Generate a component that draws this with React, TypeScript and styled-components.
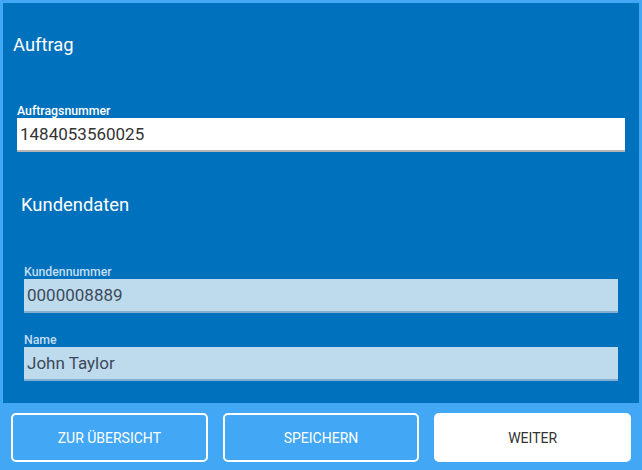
import styled, { createGlobalStyle } from 'styled-components';

const GlobalStyle = createGlobalStyle`
  html, body {
    margin: 0;
    padding: 0;
    background: #42a7f5;
    font-family: Roboto, 'Liberation Sans', sans-serif;
  }
`;

const StyledPage = styled.div`
  width: 642px;
  height: 470px;
  display: flex;
  flex-direction: column;
  box-sizing: border-box;
  padding-top: 3px;
  background: #42a7f5;
`;

const StyledPanel = styled.div`
  margin: 0 3px;
  height: 400px;
  box-sizing: border-box;
  padding: 31px 14px 0 10px;
  background: #0071bc;
`;

const StyledHeading = styled.div`
  font-size: 18.4px;
  line-height: 22px;
  color: #ffffff;
`;

const StyledFieldGroup = styled.div<{ $top: number; $indent: number }>`
  display: flex;
  flex-direction: column;
  margin-top: ${props => props.$top}px;
  margin-left: ${props => props.$indent}px;
`;

const StyledSection = styled.div`
  margin: 42px 7px 0 8px;
`;

const StyledLabel = styled.label<{ $disabled?: boolean }>`
  display: block;
  font-size: 12.3px;
  line-height: 14px;
  font-weight: 500;
  color: ${props => (props.$disabled ? '#c4def2' : '#ffffff')};
`;

const StyledInput = styled.div<{ $disabled?: boolean }>`
  height: 34px;
  box-sizing: border-box;
  padding: 0 3px;
  display: flex;
  align-items: center;
  font-size: 17px;
  background: ${props => (props.$disabled ? '#bedbed' : '#ffffff')};
  color: ${props => (props.$disabled ? '#3b4a5b' : '#333333')};
  border-bottom: 2px solid ${props => (props.$disabled ? '#82aed0' : '#b4b4b4')};
`;

const StyledFooter = styled.div`
  display: flex;
  gap: 15px;
  padding: 10px 11px 0;
`;

const StyledButton = styled.button<{ $primary?: boolean }>`
  flex: 1;
  height: 49px;
  box-sizing: border-box;
  border: 2px solid #ffffff;
  border-radius: 5px;
  background: ${props => (props.$primary ? '#ffffff' : '#42a7f5')};
  color: ${props => (props.$primary ? '#333333' : '#ffffff')};
  font-family: Roboto, 'Liberation Sans', sans-serif;
  font-size: 14px;
  font-weight: 400;
  text-transform: uppercase;
  cursor: pointer;
`;

type FieldProps = {
  label: string;
  value: string;
  disabled?: boolean;
  top: number;
  indent: number;
};

const Field = ({ label, value, disabled, top, indent }: FieldProps) => (
  <StyledFieldGroup $top={top} $indent={indent}>
    <StyledLabel $disabled={disabled}>{label}</StyledLabel>
    <StyledInput $disabled={disabled}>{value}</StyledInput>
  </StyledFieldGroup>
);

export default function App() {
  return (
    <>
      <GlobalStyle />
      <StyledPage>
        <StyledPanel>
          <StyledHeading>Auftrag</StyledHeading>
          <Field label="Auftragsnummer" value="1484053560025" top={48} indent={4} />
          <StyledSection>
            <StyledHeading>Kundendaten</StyledHeading>
            <Field label="Kundennummer" value="0000008889" disabled top={49} indent={3} />
            <Field label="Name" value="John Taylor" disabled top={20} indent={3} />
          </StyledSection>
        </StyledPanel>
        <StyledFooter>
          <StyledButton>Zur Übersicht</StyledButton>
          <StyledButton>Speichern</StyledButton>
          <StyledButton $primary>Weiter</StyledButton>
        </StyledFooter>
      </StyledPage>
    </>
  );
}
